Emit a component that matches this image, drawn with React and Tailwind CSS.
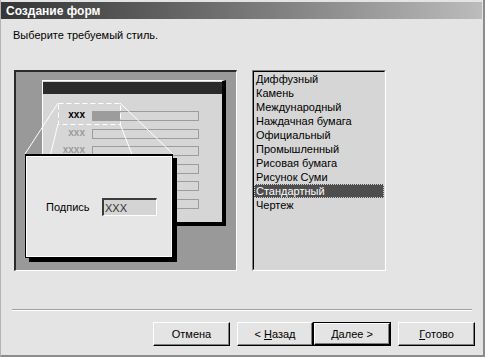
import React from "react";

const styles = [
  "Диффузный",
  "Камень",
  "Международный",
  "Наждачная бумага",
  "Официальный",
  "Промышленный",
  "Рисовая бумага",
  "Рисунок Суми",
  "Стандартный",
  "Чертеж",
];

function Bevel({ children, className = "" }) {
  return (
    <div
      className={
        "h-full w-full flex items-center justify-center border-t border-l border-t-white border-l-white border-b border-r border-b-black border-r-black shadow-[inset_-1px_-1px_0_#808080] " +
        className
      }
    >
      {children}
    </div>
  );
}

function MiniRow({ label, labelClass, filled }) {
  return (
    <div className="flex h-[10px]">
      <div className={"w-[42px] text-right self-start font-bold text-[10px] leading-[7px] " + labelClass}>
        {label}
      </div>
      <div className="ml-[7px] w-[107px] h-[10px] border border-[#9c9c9c] flex">
        {filled && <div className="w-[27px] h-full bg-[#9c9c9c]" />}
      </div>
    </div>
  );
}

export default function App() {
  return (
    <div className="w-[485px] h-[357px] bg-[#e4e4e4] border-l border-l-[#b4b4b4] border-r-2 border-r-[#8c8c8c] border-b-2 border-b-[#8c8c8c] pt-[2px] pr-[1px] flex flex-col font-['Liberation_Sans',Arial,sans-serif] text-[11px] text-black overflow-hidden">
      {/* Title bar */}
      <div className="h-[17px] shrink-0 bg-linear-to-r from-[#363636] to-[#bcbcbc] pl-[5px] pt-[2px] text-white font-bold text-[12px] leading-[15px]">
        Создание форм
      </div>

      {/* Prompt */}
      <div className="pl-[12px] pt-[10px] leading-[13px]">Выберите требуемый стиль.</div>

      {/* Main row */}
      <div className="mt-[28px] pl-[13px] flex gap-[15px]">
        {/* Preview panel */}
        <div className="relative w-[223px] h-[201px] shrink-0 border-t-2 border-l-2 border-t-[#2a2a2a] border-l-[#2a2a2a] border-b border-r border-b-white border-r-white bg-[#999999]">
          {/* Mini form */}
          <div className="absolute left-[26px] top-[8px] w-[184px] h-[146px] bg-[#d6d6d6] border-t border-l border-t-white border-l-white border-r-4 border-b-4 border-r-black border-b-black flex flex-col">
            <div className="mt-[1px] h-[12px] bg-[#2b2b2b]" />
            <div className="mt-[17px] flex flex-col gap-[7.6px]">
              <MiniRow label="xxx" labelClass="text-black" filled />
              <MiniRow label="xxx" labelClass="text-[#9c9c9c]" />
              <MiniRow label="xxxx" labelClass="text-[#9c9c9c]" />
              <MiniRow label="" labelClass="" />
              <MiniRow label="" labelClass="" />
              <MiniRow label="" labelClass="" />
            </div>
          </div>

          {/* Zoom lines and selection */}
          <svg className="absolute left-0 top-0" width="220" height="198" viewBox="0 0 220 198">
            <rect x="42.5" y="31.5" width="62" height="21" fill="none" stroke="#ffffff" strokeWidth="1" strokeDasharray="5 3" />
            <line x1="42" y1="31" x2="9" y2="82" stroke="#ffffff" strokeWidth="1" />
            <line x1="104" y1="31" x2="157" y2="82" stroke="#ffffff" strokeWidth="1" />
            <line x1="42" y1="52" x2="9" y2="186" stroke="#ffffff" strokeWidth="1" />
            <line x1="104" y1="52" x2="157" y2="186" stroke="#ffffff" strokeWidth="1" />
          </svg>

          {/* Callout */}
          <div className="absolute left-[9px] top-[82px] w-[148px] h-[104px] bg-[#e6e6e6] border border-black border-t-2 shadow-[4px_4px_0_#000,inset_0_0_0_1px_#fff]">
            <div className="pt-[42px] pl-[20px] flex items-center">
              <div className="w-[56px] leading-[13px]">Подпись</div>
              <div className="w-[55px] h-[18px] bg-[#d4d4d4] border-t-2 border-l-2 border-t-[#3c3c3c] border-l-[#3c3c3c] border-b border-r border-b-white border-r-white pl-[1px] flex items-center text-[11px] text-[#333] leading-[12px]">
                XXX
              </div>
            </div>
          </div>
        </div>

        {/* List box */}
        <div className="w-[134px] h-[201px] shrink-0 border border-t-[#808080] border-l-[#808080] border-b-white border-r-white">
          <div className="h-full w-full border border-t-black border-l-black border-b-[#d8d8d8] border-r-[#d8d8d8] bg-[#d6d6d6]">
            {styles.map((s) => {
              const sel = s === "Стандартный";
              return (
                <div
                  key={s}
                  className={
                    "h-[14px] leading-[14px] px-[2px] whitespace-nowrap " +
                    (sel
                      ? "bg-[#4e4e4e] text-white outline-1 outline-dotted outline-[#d0d0d0] -outline-offset-1"
                      : "")
                  }
                >
                  {s}
                </div>
              );
            })}
          </div>
        </div>
      </div>

      {/* Separator */}
      <div className="mt-[38px] ml-[11px] w-[460px] h-[2px] border-t border-t-[#a0a0a0] border-b border-b-white" />

      {/* Buttons */}
      <div className="mt-[11px] flex justify-end pr-[7px]">
        <div className="w-[77px] h-[24px]">
          <Bevel>Отмена</Bevel>
        </div>
        <div className="ml-[7px] w-[76px] h-[24px]">
          <Bevel>
            &lt;&nbsp;<span className="underline">Н</span>азад
          </Bevel>
        </div>
        <div className="w-[78px] h-[24px] border border-black">
          <Bevel>
            <span className="underline">Д</span>алее&nbsp;&gt;
          </Bevel>
        </div>
        <div className="ml-[7px] w-[77px] h-[24px]">
          <Bevel>
            <span className="underline">Г</span>отово
          </Bevel>
        </div>
      </div>
    </div>
  );
}
